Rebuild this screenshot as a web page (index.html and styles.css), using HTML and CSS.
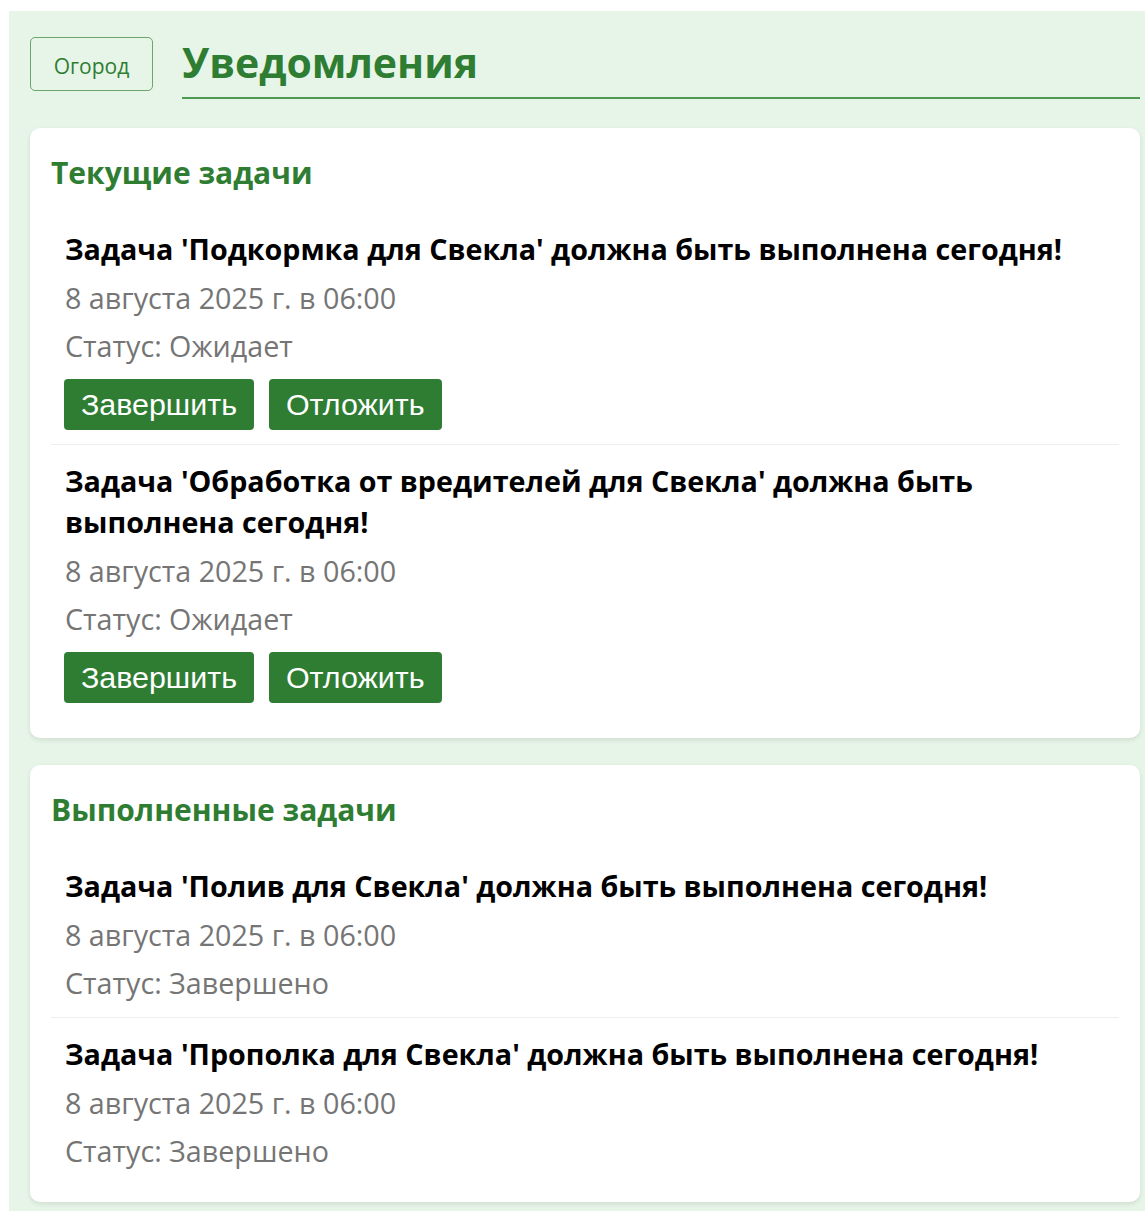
FILE: index.html
```html
<!DOCTYPE html>
<html lang="ru">
<head>
<meta charset="utf-8">
<title>Уведомления</title>
<link rel="stylesheet" href="styles.css">
</head>
<body>
<div class="page">
  <header class="page-header">
    <button class="back-btn" type="button">Огород</button>
    <h1 class="page-title">Уведомления</h1>
  </header>

  <section class="card">
    <h2 class="card-title">Текущие задачи</h2>
    <div class="task">
      <p class="task-text">Задача 'Подкормка для Свекла' должна быть выполнена сегодня!</p>
      <p class="task-meta">8 августа 2025 г. в 06:00</p>
      <p class="task-meta">Статус: Ожидает</p>
      <div class="task-actions">
        <button class="btn" type="button">Завершить</button>
        <button class="btn" type="button">Отложить</button>
      </div>
    </div>
    <div class="task">
      <p class="task-text">Задача 'Обработка от вредителей для Свекла' должна быть выполнена сегодня!</p>
      <p class="task-meta">8 августа 2025 г. в 06:00</p>
      <p class="task-meta">Статус: Ожидает</p>
      <div class="task-actions">
        <button class="btn" type="button">Завершить</button>
        <button class="btn" type="button">Отложить</button>
      </div>
    </div>
  </section>

  <section class="card card-done">
    <h2 class="card-title">Выполненные задачи</h2>
    <div class="task">
      <p class="task-text">Задача 'Полив для Свекла' должна быть выполнена сегодня!</p>
      <p class="task-meta">8 августа 2025 г. в 06:00</p>
      <p class="task-meta">Статус: Завершено</p>
    </div>
    <div class="task">
      <p class="task-text">Задача 'Прополка для Свекла' должна быть выполнена сегодня!</p>
      <p class="task-meta">8 августа 2025 г. в 06:00</p>
      <p class="task-meta">Статус: Завершено</p>
    </div>
  </section>
</div>
</body>
</html>
```

FILE: styles.css
```css
html {
  overflow: hidden;
}

body {
  margin: 11px 0 0 9px;
  background: #ffffff;
  font-family: "Open Sans", "Noto Sans", sans-serif;
}

.page {
  width: 1152px;
  box-sizing: border-box;
  padding: 26px 21px 10px 21px;
  background: #e7f5e8;
  min-height: 1200px;
}

/* header: back button + title with underline */
.page-header {
  display: flex;
  align-items: flex-start;
  gap: 29px;
  margin-bottom: 29px;
}

.back-btn {
  flex: none;
  width: 123px;
  height: 54px;
  border: 1px solid #6aa56d;
  border-radius: 5px;
  background: transparent;
  color: #2e7d32;
  font-family: "Open Sans", sans-serif;
  font-size: 21px;
  padding: 4px 0 0;
}

.page-title {
  flex: 1;
  margin: 0;
  color: #2e7d32;
  font-size: 41px;
  font-weight: 700;
  line-height: 50px;
  padding-bottom: 10px;
  border-bottom: 2px solid #4f9a53;
}

/* cards */
.card {
  background: #ffffff;
  border-radius: 10px;
  box-shadow: 0 2px 5px rgba(0, 0, 0, 0.1);
  padding: 21px;
  margin-bottom: 27px;
}

.card-title {
  margin: 3px 0 20px 0;
  color: #2e7d32;
  font-size: 30px;
  font-weight: 700;
  line-height: 41px;
}

.task {
  padding: 15px 14px 14px;
  border-bottom: 1px solid #eeeeee;
}

.task:last-child {
  border-bottom: none;
}

/* completed tasks have no button row, so the last one sits tighter */
.card-done .task:last-child {
  padding-bottom: 10px;
}

.task-text {
  margin: 0 0 9px;
  color: #000000;
  font-size: 28.7px;
  font-weight: 700;
  line-height: 41px;
}

.task-meta {
  margin: 0 0 8px;
  color: #757575;
  font-size: 28.7px;
  line-height: 40px;
}

.task-meta:last-child {
  margin-bottom: 0;
}

.task-actions {
  display: flex;
  gap: 15px;
  margin-top: 13px;
  margin-left: -1px;
}

.btn {
  height: 51px;
  padding: 0 17px;
  border: none;
  border-radius: 4px;
  background: #2e7d32;
  color: #ffffff;
  font-family: "Liberation Sans", Arial, sans-serif;
  font-size: 30.4px;
}
```
